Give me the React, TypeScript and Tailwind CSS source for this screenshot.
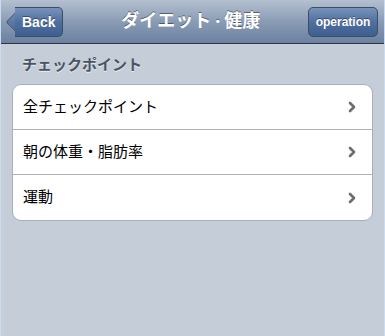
import { ChevronRight } from "lucide-react";

const rows = ["全チェックポイント", "朝の体重・脂肪率", "運動"];

const jp = { fontFamily: '"Liberation Sans", "Noto Sans CJK JP", sans-serif' };

export default function App() {
  return (
    <div
      className="w-[385px] h-[336px] bg-[#c5cdd8] border-x border-[#c9dcf2] flex flex-col"
      style={jp}
    >
      <div className="h-[44px] shrink-0 flex items-center justify-between pl-[6px] pr-[6px] bg-gradient-to-b from-[#b4c0d0] via-[#8a9cb5] to-[#6b81a0] border-b border-[#2d3642]">
        <div className="relative flex items-center h-[30px] mt-[1px]">
          <div className="w-[22px] h-[22px] rotate-45 rounded-[3px] bg-gradient-to-br from-[#7b95ba] to-[#3f5f91] border-l border-b border-[#3c4d66] -mr-[14px] translate-x-[3px]" />
          <div className="h-[30px] pl-[7px] pr-[7px] flex items-center rounded-r-[5px] bg-gradient-to-b from-[#7893ba] via-[#4f6f9f] to-[#3e5f91] border border-l-0 border-[#3c4d66] text-white font-bold text-[14px] [text-shadow:0_-1px_0_rgba(0,0,0,0.4)] relative">
            Back
          </div>
        </div>
        <div className="text-white font-bold text-[18px] [text-shadow:0_-1px_0_rgba(0,0,0,0.45)] ml-[10px] flex items-center">
          <span>ダイエット</span>
          <span className="text-[13px]">・</span>
          <span>健康</span>
        </div>
        <div className="h-[30px] w-[70px] mt-[1px] flex items-center justify-center rounded-[5px] bg-gradient-to-b from-[#7893ba] via-[#4f6f9f] to-[#3e5f91] border border-[#3c4d66] text-white font-bold text-[12px] [text-shadow:0_-1px_0_rgba(0,0,0,0.4)]">
          operation
        </div>
      </div>
      <div className="px-[11px]">
        <div className="h-[40px] flex items-center pl-[10px] pt-[3px] text-[15px] font-bold text-[#4a5266] [text-shadow:0_1px_0_rgba(255,255,255,0.7)]">
          チェックポイント
        </div>
        <div className="bg-white rounded-[9px] border border-[#a9b0ba]">
          {rows.map((r, i) => (
            <div
              key={r}
              className={`h-[45px] flex items-center justify-between pl-[10px] pr-[12px] ${
                i < rows.length - 1 ? "border-b border-[#b3b3b3]" : ""
              }`}
            >
              <span className="text-[15px] text-black">{r}</span>
              <ChevronRight className="w-[16px] h-[16px] text-[#6e6e6e]" strokeWidth={4} />
            </div>
          ))}
        </div>
      </div>
    </div>
  );
}
